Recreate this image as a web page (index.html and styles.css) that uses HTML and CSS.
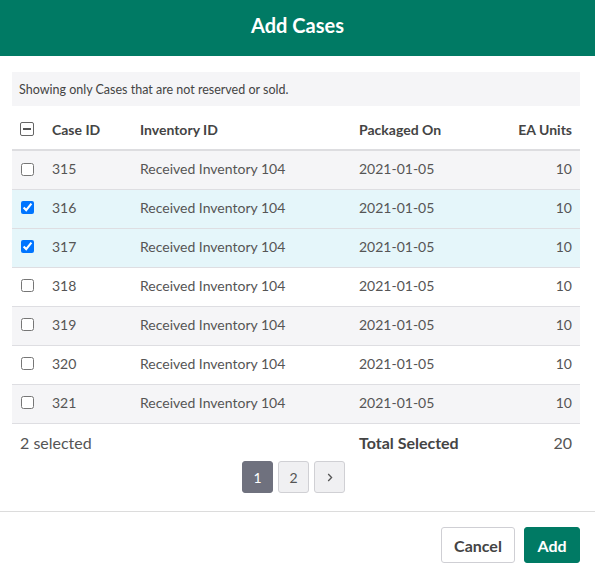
FILE: index.html
```html
<!DOCTYPE html>
<html>
<head>
<meta charset="utf-8">
<link rel="stylesheet" href="styles.css">
</head>
<body>
<div class="modal">
  <div class="modal-header">Add Cases</div>
  <div class="modal-body">
    <div class="info">Showing only Cases that are not reserved or sold.</div>
    <table class="cases">
      <colgroup>
        <col class="c-check"><col class="c-id"><col class="c-inv"><col class="c-date"><col class="c-units">
      </colgroup>
      <thead>
        <tr>
          <th><span class="indet"></span></th>
          <th>Case ID</th>
          <th>Inventory ID</th>
          <th>Packaged On</th>
          <th class="num">EA Units</th>
        </tr>
      </thead>
      <tbody>
        <tr class="odd"><td><input type="checkbox"></td><td>315</td><td>Received Inventory 104</td><td>2021-01-05</td><td class="num">10</td></tr>
        <tr class="sel"><td><input type="checkbox" checked></td><td>316</td><td>Received Inventory 104</td><td>2021-01-05</td><td class="num">10</td></tr>
        <tr class="sel"><td><input type="checkbox" checked></td><td>317</td><td>Received Inventory 104</td><td>2021-01-05</td><td class="num">10</td></tr>
        <tr><td><input type="checkbox"></td><td>318</td><td>Received Inventory 104</td><td>2021-01-05</td><td class="num">10</td></tr>
        <tr class="odd"><td><input type="checkbox"></td><td>319</td><td>Received Inventory 104</td><td>2021-01-05</td><td class="num">10</td></tr>
        <tr><td><input type="checkbox"></td><td>320</td><td>Received Inventory 104</td><td>2021-01-05</td><td class="num">10</td></tr>
        <tr class="odd"><td><input type="checkbox"></td><td>321</td><td>Received Inventory 104</td><td>2021-01-05</td><td class="num">10</td></tr>
      </tbody>
      <tfoot>
        <tr>
          <td colspan="3">2 selected</td>
          <td class="strong">Total Selected</td>
          <td class="num">20</td>
        </tr>
      </tfoot>
    </table>
    <div class="pager">
      <button class="page active">1</button>
      <button class="page">2</button>
      <button class="page"><svg width="6" height="9" viewBox="0 0 6 9"><path d="M1.2 1 L4.6 4.5 L1.2 8" fill="none" stroke="#555" stroke-width="1.3"/></svg></button>
    </div>
  </div>
  <div class="modal-footer">
    <button class="btn btn-default">Cancel</button>
    <button class="btn btn-primary">Add</button>
  </div>
</div>
</body>
</html>
```
FILE: styles.css
```css
html, body {
  margin: 0;
  padding: 0;
  background: #fff;
  font-family: Lato, "Open Sans", Arial, sans-serif;
  color: #555;
}
.modal {
  width: 595px;
}
.modal-header {
  height: 56px;
  background: #007a64;
  color: #fff;
  font-weight: 700;
  font-size: 20px;
  display: flex;
  align-items: center;
  justify-content: center;
  padding-bottom: 6px;
  box-sizing: border-box;
}
.modal-body {
  padding: 16px 15px 0 12px;
}
.info {
  background: #f5f5f7;
  height: 34px;
  display: flex;
  align-items: center;
  padding: 0 7px;
  font-size: 12.5px;
  color: #444;
}
.cases {
  width: 100%;
  border-collapse: collapse;
  table-layout: fixed;
  font-size: 14px;
}
.c-check { width: 32px; }
.c-id { width: 88px; }
.c-inv { width: 219px; }
.c-date { width: 150px; }
.cases th {
  text-align: left;
  font-weight: 700;
  color: #444;
  height: 44px;
  padding: 4px 8px 0;
  border-bottom: 2px solid #dddde0;
  box-sizing: border-box;
}
.cases td {
  height: 39px;
  padding: 0 8px 3px;
  border-bottom: 1px solid #dedee2;
  color: #555;
  box-sizing: border-box;
}
.cases tr.odd td { background: #f5f5f7; }
.cases tr.sel td { background: #e5f6fa; }
.cases .num { text-align: right; }
.cases td:first-child, .cases th:first-child {
  padding-left: 5px;
  padding-right: 0;
}
.cases input[type="checkbox"] {
  margin: 0 0 0 4px;
  width: 13px;
  height: 13px;
  vertical-align: middle;
  position: relative;
  top: -1px;
}
.indet {
  display: inline-block;
  width: 12px;
  height: 12px;
  border: 1px solid #666;
  border-radius: 2px;
  margin-left: 3px;
  position: relative;
  vertical-align: middle;
  top: -2px;
}
.indet::after {
  content: "";
  position: absolute;
  left: 2px;
  right: 2px;
  top: 5px;
  height: 1.4px;
  background: #555;
}
.cases tfoot td {
  border-bottom: none;
  background: none;
  font-size: 16px;
  height: 38px;
  padding-top: 2px;
  padding-bottom: 1px;
}
.cases tfoot td:first-child { padding-left: 8px; }
.cases tfoot .strong { font-weight: 700; color: #444; }
.pager {
  display: flex;
  justify-content: center;
  gap: 5px;
  padding-bottom: 18px;
  padding-right: 5px;
}
.page {
  width: 31px;
  height: 32px;
  border: 1px solid #d0d0d4;
  background: #f0f0f2;
  border-radius: 3px;
  font-family: inherit;
  font-size: 14px;
  color: #555;
  padding: 0;
  display: flex;
  align-items: center;
  justify-content: center;
}
.page.active {
  background: #6f717e;
  border-color: #6f717e;
  color: #fff;
}
.modal-footer {
  border-top: 1px solid #dcdcdc;
  display: flex;
  justify-content: flex-end;
  gap: 9px;
  padding: 15px 15px 0 0;
}
.btn {
  height: 36px;
  border-radius: 3px;
  font-family: inherit;
  font-size: 16px;
  font-weight: 700;
  padding: 0;
}
.btn-default {
  width: 74px;
  background: #fff;
  border: 1px solid #cfcfd4;
  color: #444;
}
.btn-primary {
  width: 56px;
  background: #007a64;
  border: 1px solid #007a64;
  color: #fff;
}
```
